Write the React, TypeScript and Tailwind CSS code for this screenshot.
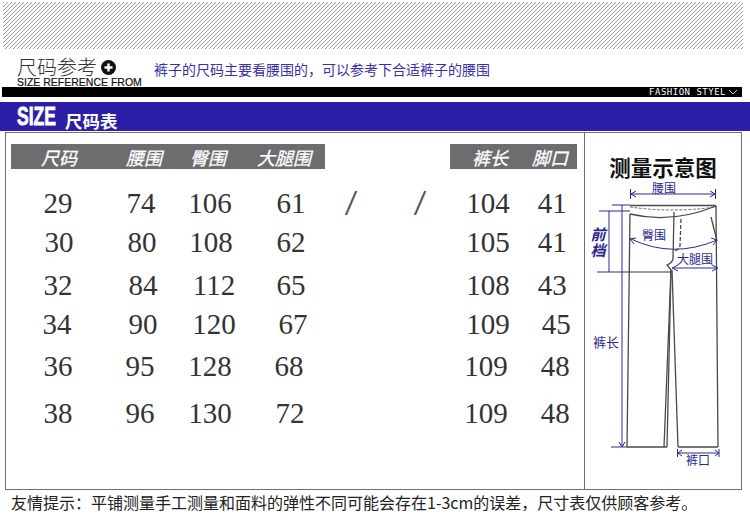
const cjk = "font-['Noto_Sans_CJK_SC','Liberation_Sans',sans-serif]"

// column centres of the grid below, page x
const colCenters = [58, 141, 211, 285, 351, 420, 488, 548.5]

// ── Data: each cell is [text, centre x], the numbers in the picture are hand placed ──
const rows: { h: number; cells: [string, number][] }[] = [
  { h: 40, cells: [['29', 58], ['74', 141], ['106', 210], ['61', 291], ['/', 351], ['/', 420], ['104', 488], ['41', 552]] },
  { h: 38, cells: [['30', 59], ['80', 142], ['108', 211], ['62', 291], ['', 351], ['', 420], ['105', 488], ['41', 552]] },
  { h: 48, cells: [['32', 58], ['84', 143], ['112', 214], ['65', 291], ['', 351], ['', 420], ['108', 488], ['43', 552]] },
  { h: 30, cells: [['34', 57], ['90', 143], ['120', 214], ['67', 293], ['', 351], ['', 420], ['109', 488], ['45', 556]] },
  { h: 54, cells: [['36', 58], ['95', 140], ['128', 210], ['68', 289], ['', 351], ['', 420], ['109', 486], ['48', 555]] },
  { h: 40, cells: [['38', 58], ['96', 140], ['130', 210], ['72', 290], ['', 351], ['', 420], ['109', 486], ['48', 555]] },
]

function Diagram() {
  const blue = '#2a2a8e'
  const dark = '#4a4a4a'
  const label = { fontFamily: "'Noto Sans CJK SC', sans-serif", fill: blue, textAnchor: 'middle' as const }
  return (
    <svg viewBox="585 180 156 290" className="block mt-[2px] w-[156px] h-[290px]" fill="none">
      {/* trousers */}
      <g stroke={dark} strokeWidth="1.3">
        <path d="M630 206.5 H716" strokeWidth="1.6" />
        <path d="M630 208 Q672 214 716 208" strokeWidth="0.8" strokeDasharray="3 1.5" />
        <path d="M630 215 Q672 225 716 207" />
        <path d="M630 215 L627 448" />
        <path d="M716 207 L718 448" />
        <path d="M627 448 H667" />
        <path d="M678 448 H718" />
        <path d="M674 213 L673 260 Q672 264 667 266 L671 271 L664 448" />
        <path d="M671 271 L667 448" />
        <path d="M672 271 L678 448" />
        <path d="M681 220 L680 247 Q678 252 673 252" strokeDasharray="4 2" />
        <path d="M711 218 L717 242" />
      </g>
      {/* measure lines */}
      <g stroke={blue} strokeWidth="1">
        <path d="M631 195 H715" />
        <path d="M630.5 190 V200 M715.5 190 V200" />
        <path d="M636 192 L631 195 L636 198 M710 192 L715 195 L710 198" />
        <path d="M612 206 H630 M599 212 H630 M597 273 H671" />
        <path d="M609 212 V273" />
        <path d="M622 206 V447" />
        <path d="M611 448 H627" />
        <path d="M619 443 L622 448 L625 443" />
        <path d="M631 240 Q673 260 717 241" />
        <path d="M636 239 L630 240 L634 245 M711 239 L717 241 L713 246" />
        <path d="M673 269 H717" />
        <path d="M678 266 L672 269 L678 272 M712 266 L718 269 L712 272" />
        <path d="M678 454 H719" />
        <path d="M677.5 450 V458 M719 450 V458" />
        <path d="M682 451 L678 454 L682 457 M715 451 L719 454 L715 457" />
      </g>
      <text x="664" y="193.5" fontSize="12" style={label}>腰围</text>
      <text x="654" y="241" fontSize="12" style={label}>臀围</text>
      <text x="695" y="265" fontSize="12" style={label}>大腿围</text>
      <text x="606" y="348" fontSize="13" style={label}>裤长</text>
      <text x="698" y="466" fontSize="12" style={label}>裤口</text>
      <text x="598" y="241" fontSize="15" fontWeight="700" fontStyle="italic" style={label}>前</text>
      <text x="598" y="257" fontSize="15" fontWeight="700" fontStyle="italic" style={label}>档</text>
    </svg>
  )
}

export default function App() {
  return (
    <div className={`w-[750px] h-[520px] bg-white overflow-hidden flex flex-col ${cjk}`}>
      {/* Hatched strip */}
      <div className="mt-[2px] ml-[3px] w-[740px] h-[47px] shrink-0 bg-[linear-gradient(135deg,#9a9a9a_12.5%,transparent_12.5%,transparent_50%,#9a9a9a_50%,#9a9a9a_62.5%,transparent_62.5%)] bg-[length:4px_4px]" />

      {/* Heading */}
      <div className="h-[38px] shrink-0 flex pl-[17px]">
        <div className="w-[137px] shrink-0 pt-[8px]">
          <div className="flex items-center h-[20px]">
            <span className="text-[20px] leading-none text-[#333] font-light">尺码参考</span>
            <span className="ml-[4px] w-[15px] h-[15px] rounded-full bg-[#111] flex items-center justify-center">
              <svg viewBox="0 0 15 15" className="w-[15px] h-[15px]"><path d="M7.5 3.5 V11.5 M3.5 7.5 H11.5" stroke="#fff" strokeWidth="2.4" /></svg>
            </span>
          </div>
          <div className="font-['Liberation_Sans',sans-serif] text-[10.5px] leading-[10px] whitespace-nowrap text-[#111] [-webkit-text-stroke:0.2px_#111]">SIZE REFERENCE FROM</div>
        </div>
        <div className="pt-[10px] text-[14px] leading-[20px] text-[#3a30a6] whitespace-nowrap">{'裤子的尺码主要看腰围的\uFF0C可以参考下合适裤子的腰围'}</div>
      </div>

      {/* Black bar */}
      <div className="ml-[2px] w-[740px] h-[10px] shrink-0 bg-black flex items-center justify-end pr-[4px]">
        <span className="font-['DejaVu_Sans_Mono','Liberation_Mono',monospace] text-[9px] tracking-[0.5px] leading-none text-white">FASHION STYEL</span>
        <svg viewBox="0 0 10 6" className="ml-[2px] w-[10px] h-[6px]" fill="none"><path d="M1 1 L5 5 L9 1" stroke="#fff" strokeWidth="0.8" /></svg>
      </div>

      {/* Blue bar */}
      <div className="mt-[5px] h-[29px] shrink-0 bg-[#2a1fa6] flex items-center pl-[17px] text-white">
        <span className="w-[48px] shrink-0 font-['Liberation_Sans',sans-serif] font-bold text-[25px] leading-none origin-left scale-x-[0.7] [-webkit-text-stroke:0.8px_white]">SIZE</span>
        <span className="text-[17.5px] font-bold leading-none mt-[8px]">尺码表</span>
      </div>

      {/* Table box */}
      <div className="mt-[1px] ml-[5px] w-[737px] h-[358px] shrink-0 border border-[#6f6f6f] flex">
        <div className="w-[578px] shrink-0 pl-[5px] pt-[11px]">
          <div className="flex h-[25px]">
            <div className="w-[314px] bg-[#6d6d70] flex items-center text-white italic text-[18px] leading-none [-webkit-text-stroke:0.3px_white]">
              <span className="ml-[30px]">尺码</span>
              <span className="ml-[49px]">腰围</span>
              <span className="ml-[28px]">臀围</span>
              <span className="ml-[31px]">大腿围</span>
            </div>
            <div className="ml-[125px] w-[127px] bg-[#6d6d70] flex items-center text-white italic text-[18px] leading-none [-webkit-text-stroke:0.3px_white]">
              <span className="ml-[22px]">裤长</span>
              <span className="ml-[24px]">脚口</span>
            </div>
          </div>

          <div className="mt-[14px] font-['Liberation_Serif',serif] text-[29px] leading-none text-[#333]">
            {rows.map(row => (
              <div
                key={row.cells[0][0]}
                className="grid grid-cols-[94px_72px_68px_80px_52px_86px_50px_71.5px] items-center"
                style={{ height: row.h }}
              >
                {row.cells.map(([text, x], i) => (
                  <span
                    key={i}
                    className={text === '/' ? 'text-center text-[36px] text-[#555] scale-x-125' : 'text-center'}
                    style={{ transform: `translateX(${x - colCenters[i]}px)` }}
                  >
                    {text}
                  </span>
                ))}
              </div>
            ))}
          </div>
        </div>

        {/* Measuring diagram */}
        <div className="flex-1 border-l border-[#6f6f6f] pt-[24px]">
          <div className="text-[21.5px] font-bold leading-[20px] text-[#111] text-center whitespace-nowrap">测量示意图</div>
          <Diagram />
        </div>
      </div>

      {/* Footnote */}
      <div className="pl-[11px] text-[16px] leading-[24px] text-[#222] whitespace-nowrap">
        {'友情提示\uFF1A平铺测量手工测量和面料的弹性不同可能会存在1-3cm的误差\uFF0C尺寸表仅供顾客参考。'}
      </div>
    </div>
  )
}
